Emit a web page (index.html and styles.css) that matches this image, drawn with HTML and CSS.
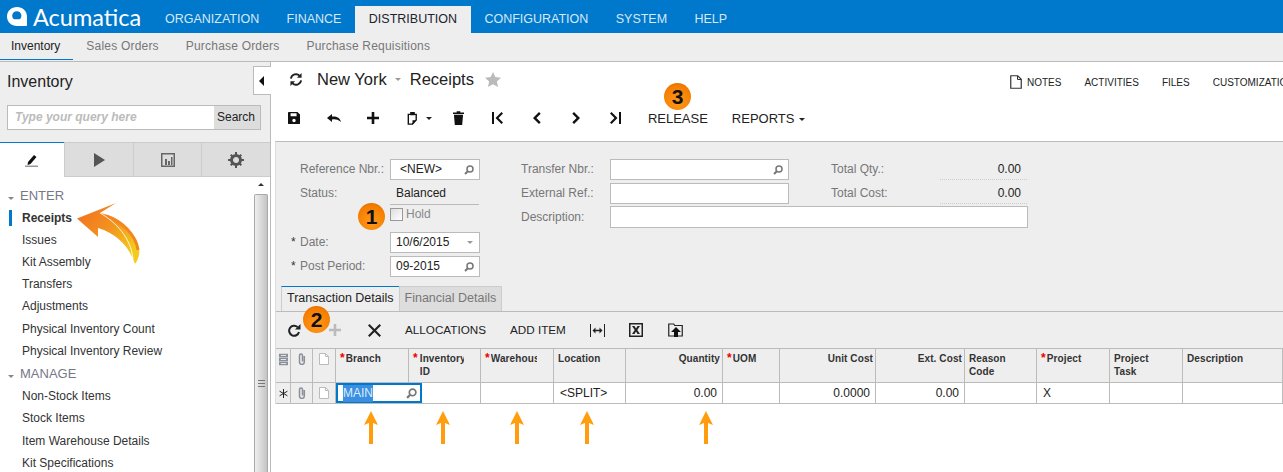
FILE: index.html
```html
<!DOCTYPE html>
<html>
<head>
    <title>Receipts</title>
    <link rel="stylesheet" href="styles.css">
</head>
<body>
    <div id="page">
        <div class="topBar">
            <div class="logo">
                <svg width="20" height="19" viewBox="0 0 20 19"><path fill="#fff" fill-rule="evenodd" d="M10 0C4.400 0 0 4.100 0 9.500S4.400 19 10 19h9c.6 0 1-.4 1-1V9.500C20 4.100 15.600 0 10 0zM9.800 4.200c2.600 0 4.600 2 4.600 4.400 0 1.700-.7 3.600-2 3.600H7.200c-1.300 0-2-1.900-2-3.600 0-2.400 2-4.400 4.600-4.400z"/></svg>
                <span class="logoText">Acumatica</span>
            </div>
            <div class="topNav">
                <a>ORGANIZATION</a>
                <a>FINANCE</a>
                <a class="active">DISTRIBUTION</a>
                <a>CONFIGURATION</a>
                <a>SYSTEM</a>
                <a>HELP</a>
            </div>
        </div>
        <div class="subNav">
            <a class="active">Inventory</a>
            <a>Sales Orders</a>
            <a>Purchase Orders</a>
            <a>Purchase Requisitions</a>
        </div>
        <div class="main">
            <div class="side">
                <div class="sideTitle">Inventory</div>
                <div class="searchBox">
                    <span class="searchHint">Type your query here</span>
                    <span class="searchBtn">Search</span>
                </div>
                <div class="sideTabs">
                    <div class="sideTab active">
                        <svg width="14" height="14" viewBox="0 0 14 14"><path d="M3 9l6-7 2.500 2-6 7-3 1z" fill="#111"/><rect x="0" y="12.500" width="13" height="1.500" fill="#999"/></svg>
                    </div>
                    <div class="sideTab">
                        <svg width="12" height="14" viewBox="0 0 12 14"><path d="M1 0l11 7-11 7z" fill="#555"/></svg>
                    </div>
                    <div class="sideTab">
                        <svg width="14" height="14" viewBox="0 0 14 14"><rect x=".75" y=".75" width="12.500" height="12.500" fill="none" stroke="#666" stroke-width="1.500"/><path d="M4 6h2v6H4zM7 8h2v4H7zM10 4h1.500v8H10z" fill="#666"/></svg>
                    </div>
                    <div class="sideTab">
                        <svg width="16" height="16" viewBox="0 0 16 16"><circle cx="8" cy="8" r="4.500" fill="none" stroke="#555" stroke-width="3"/><path d="M7 0h2v3H7zM7 13h2v3H7zM0 7h3v2H0zM13 7h3v2h-3zM2 3.400L3.400 2l2 2L4 5.400zM10.600 12L12 10.600l2 2-1.400 1.400zM12.600 2L14 3.400l-2 2L10.600 4zM4 10.600L5.400 12l-2 2L2 12.600z" fill="#555"/></svg>
                    </div>
                </div>
                <div class="sideBody">
                    <div class="menu">
                        <div class="menuHead"><i class="caretDown"></i>ENTER</div>
                        <div class="menuItem current">Receipts</div>
                        <div class="menuItem">Issues</div>
                        <div class="menuItem">Kit Assembly</div>
                        <div class="menuItem">Transfers</div>
                        <div class="menuItem">Adjustments</div>
                        <div class="menuItem">Physical Inventory Count</div>
                        <div class="menuItem">Physical Inventory Review</div>
                        <div class="menuHead"><i class="caretDown"></i>MANAGE</div>
                        <div class="menuItem">Non-Stock Items</div>
                        <div class="menuItem">Stock Items</div>
                        <div class="menuItem">Item Warehouse Details</div>
                        <div class="menuItem">Kit Specifications</div>
                    </div>
                    <div class="scrollBar">
                        <div class="scrollUp"></div>
                        <div class="scrollThumb"><span class="grip"></span></div>
                    </div>
                </div>
            </div>
            <div class="content">
                <div class="screenHead">
                    <div class="titleRow">
                        <svg class="refresh" width="14" height="13" viewBox="0 0 14 14"><path d="M1.500 6a5.600 5.600 0 0 1 9.500-3" fill="none" stroke="#222" stroke-width="2"/><path d="M12.500 8a5.600 5.600 0 0 1-9.500 3" fill="none" stroke="#222" stroke-width="2"/><path d="M13 0v5H8zM1 14V9h5z" fill="#222"/></svg>
                        <span class="crumb">New York</span>
                        <i class="caretGrey"></i>
                        <span class="crumb">Receipts</span>
                        <svg class="star" width="16" height="15" viewBox="0 0 16 15"><path d="M8 0l2.400 5.100 5.600.7-4.100 3.800 1.100 5.400L8 12.300 3 15l1.100-5.400L0 5.800l5.600-.7z" fill="#bbb"/></svg>
                        <div class="links">
                            <svg class="noteIcon" width="12" height="14" viewBox="0 0 12 14"><path d="M.75.75h7l3.500 3.500v9h-10.500z" fill="#fff" stroke="#333" stroke-width="1.200"/><path d="M7.500 1v3.500H11" fill="none" stroke="#333"/></svg>
                            <a class="notes">NOTES</a>
                            <a>ACTIVITIES</a>
                            <a>FILES</a>
                            <a>CUSTOMIZATION</a>
                        </div>
                    </div>
                    <div class="toolRow">
                        <span class="tool"><svg width="12" height="12" viewBox="0 0 14 14"><path fill="#111" fill-rule="evenodd" d="M1 0h10l3 3v10a1 1 0 0 1-1 1H1a1 1 0 0 1-1-1V1a1 1 0 0 1 1-1zM3 1.500V5h7V1.500zM7 8a2 2 0 1 0 0 4 2 2 0 0 0 0-4z"/></svg></span>
                        <span class="tool"><svg width="14" height="8" viewBox="0 0 14 8"><path d="M5 0L0 4l5 4V5.500c3-.5 6 0 9 2.500-1-4.500-5-6-9-5.500z" fill="#111"/></svg></span>
                        <span class="tool"><svg width="12" height="12" viewBox="0 0 12 12"><path d="M4.700 0h2.600v4.700H12v2.600H7.300V12H4.700V7.300H0V4.700h4.700z" fill="#111"/></svg></span>
                        <span class="tool toolPaste"><svg width="11" height="13" viewBox="0 0 11 14"><path d="M1 2.500h8.500v6l-4 4.500H1z" fill="none" stroke="#111" stroke-width="1.500"/><path d="M3 0h5v3.500H3zM9 9H5.500v4.500z" fill="#111"/></svg><i class="caretBlack"></i></span>
                        <span class="tool"><svg width="11" height="14" viewBox="0 0 12 15"><path d="M1 4h10l-1 11H2zM0 1.500h4V0h4v1.500h4V3H0z" fill="#111"/></svg></span>
                        <span class="tool"><svg width="11" height="12" viewBox="0 0 11 12"><path d="M0 0h2v12H0zM9.500 0L11 1.500 6.500 6l4.500 4.500L9.500 12l-6-6z" fill="#111"/></svg></span>
                        <span class="tool"><svg width="8" height="12" viewBox="0 0 8 12"><path d="M6 0l1.700 1.700L3.400 6l4.300 4.300L6 12 0 6z" fill="#111"/></svg></span>
                        <span class="tool"><svg width="8" height="12" viewBox="0 0 8 12"><path d="M2 0L.3 1.700 4.600 6 .3 10.300 2 12l6-6z" fill="#111"/></svg></span>
                        <span class="tool"><svg width="11" height="12" viewBox="0 0 11 12"><path d="M9 0h2v12H9zM1.500 0L0 1.500 4.500 6 0 10.500 1.500 12l6-6z" fill="#111"/></svg></span>
                        <a class="toolText release">RELEASE</a>
                        <a class="toolText">REPORTS<i class="caretBlack"></i></a>
                    </div>
                </div>
                <div class="formArea">
                    <div class="fields">
                        <div class="col colOne">
                            <div class="row"><label>Reference Nbr.:</label><div class="input wide"><span class="newVal">&lt;NEW&gt;</span><svg class="mag" width="10" height="10" viewBox="0 0 10 10"><circle cx="6" cy="4" r="3" fill="none" stroke="#777" stroke-width="1.500"/><path d="M3.800 6.200L1 9" stroke="#777" stroke-width="2"/></svg></div></div>
                            <div class="row"><label>Status:</label><div class="plainVal">Balanced</div></div>
                            <div class="row holdRow"><span class="check"></span><span class="checkLabel">Hold</span></div>
                            <div class="row"><label class="req">Date:</label><div class="input wide">10/6/2015<i class="caretGrey"></i></div></div>
                            <div class="row"><label class="req">Post Period:</label><div class="input wide">09-2015<svg class="mag" width="10" height="10" viewBox="0 0 10 10"><circle cx="6" cy="4" r="3" fill="none" stroke="#777" stroke-width="1.500"/><path d="M3.800 6.200L1 9" stroke="#777" stroke-width="2"/></svg></div></div>
                        </div>
                        <div class="col colTwo">
                            <div class="row"><label>Transfer Nbr.:</label><div class="input mid"><svg class="mag" width="10" height="10" viewBox="0 0 10 10"><circle cx="6" cy="4" r="3" fill="none" stroke="#777" stroke-width="1.500"/><path d="M3.800 6.200L1 9" stroke="#777" stroke-width="2"/></svg></div></div>
                            <div class="row"><label>External Ref.:</label><div class="input mid"></div></div>
                            <div class="row"><label>Description:</label><div class="input long"></div></div>
                        </div>
                        <div class="col colThree">
                            <div class="row"><label>Total Qty.:</label><div class="total">0.00</div></div>
                            <div class="row"><label>Total Cost:</label><div class="total">0.00</div></div>
                        </div>
                    </div>
                    <div class="formTabs">
                        <div class="formTab active">Transaction Details</div>
                        <div class="formTab">Financial Details</div>
                    </div>
                    <div class="gridTools">
                        <svg class="gridRefresh" width="13" height="14" viewBox="0 0 13 14"><path d="M11 9a5 5 0 1 1-1.500-5" fill="none" stroke="#222" stroke-width="2"/><path d="M12.500 1v5.500H7z" fill="#222"/></svg>
                        <svg class="gridPlus" width="12" height="12" viewBox="0 0 12 12"><path d="M4.700 0h2.600v4.700H12v2.600H7.300V12H4.700V7.300H0V4.700h4.700z" fill="#bbb"/></svg>
                        <svg class="gridDel" width="13" height="13" viewBox="0 0 13 13"><path d="M1.500 0L6.500 5l5-5L13 1.500 8 6.500l5 5-1.500 1.500-5-5-5 5L0 11.500l5-5-5-5z" fill="#222"/></svg>
                        <a class="gridBtn">ALLOCATIONS</a>
                        <a class="gridBtn">ADD ITEM</a>
                        <svg class="gridIcon" width="15" height="13" viewBox="0 0 15 13"><path d="M0 0h1v13H0zM14 0h1v13h-1zM2.500 6.500l3-3v2.200h4V3.500l3 3-3 3V7.300h-4v2.200z" fill="#222"/></svg>
                        <svg class="gridIcon" width="14" height="14" viewBox="0 0 14 14"><rect x=".75" y=".75" width="12.500" height="12.500" fill="#eee" stroke="#222" stroke-width="1.500"/><path d="M3 3h2.500L7 5.500 8.500 3H11L8.300 7 11 11H8.500L7 8.500 5.500 11H3l2.700-4z" fill="#222"/></svg>
                        <svg class="gridIcon lastIcon" width="16" height="15" viewBox="0 0 16 15"><path d="M.75 3V1h5l1 1.500h7.500V13H.75z" fill="#eee" stroke="#222" stroke-width="1.200"/><path d="M8 4l5 5h-3v5H6V9H3z" fill="#111"/></svg>
                    </div>
                    <div class="grid">
                        <div class="cell head iconCell"><svg width="9" height="13" viewBox="0 0 10 13"><path d="M0 0h10v4H0zM0 4.500h10v4H0zM0 9h10v4H0z" fill="#8a8f99"/><path d="M2 2h6M2 6.500h6M2 11h6" stroke="#eee"/></svg></div>
                        <div class="cell head iconCell"><svg width="8" height="12" viewBox="0 0 8 12"><path d="M6.300 3v6a2.400 2.400 0 0 1-4.800 0V2.500a1.500 1.500 0 0 1 3 0V8.500" fill="none" stroke="#8a8f99" stroke-width="1.500"/></svg></div>
                        <div class="cell head iconCell"><svg width="10" height="12" viewBox="0 0 10 12"><path d="M.5.500h6l3 3v8h-9z" fill="#fff" stroke="#bbb"/><path d="M6.500.500v3h3" fill="none" stroke="#bbb"/></svg></div>
                        <div class="cell head starCell"><b>*</b>Branch</div>
                        <div class="cell head starCell clipCell"><b>*</b><span class="wrapName">Inventory ID</span></div>
                        <div class="cell head starCell clipCell"><b>*</b><span class="oneLine">Warehouse</span></div>
                        <div class="cell head">Location</div>
                        <div class="cell head right">Quantity</div>
                        <div class="cell head starCell"><b>*</b>UOM</div>
                        <div class="cell head right">Unit Cost</div>
                        <div class="cell head right">Ext. Cost</div>
                        <div class="cell head">Reason<br>Code</div>
                        <div class="cell head starCell"><b>*</b>Project</div>
                        <div class="cell head">Project<br>Task</div>
                        <div class="cell head">Description</div>

                        <div class="cell iconCell rowHead"><svg width="9" height="9" viewBox="0 0 9 9"><path d="M4.500 0v9M.6 2.200l7.800 4.600M8.400 2.200L.6 6.800" stroke="#222"/></svg></div>
                        <div class="cell iconCell rowHead"><svg width="8" height="12" viewBox="0 0 8 12"><path d="M6.300 3v6a2.400 2.400 0 0 1-4.800 0V2.500a1.500 1.500 0 0 1 3 0V8.500" fill="none" stroke="#8a8f99" stroke-width="1.500"/></svg></div>
                        <div class="cell iconCell rowHead"><svg width="10" height="12" viewBox="0 0 10 12"><path d="M.5.500h6l3 3v8h-9z" fill="#fff" stroke="#bbb"/><path d="M6.500.500v3h3" fill="none" stroke="#bbb"/></svg></div>
                        <div class="cell editCell">
                            <div class="editor"><span class="selected">MAIN</span><svg class="mag" width="11" height="11" viewBox="0 0 10 10"><circle cx="6" cy="4" r="3" fill="none" stroke="#777" stroke-width="1.500"/><path d="M3.800 6.200L1 9" stroke="#777" stroke-width="2"/></svg></div>
                        </div>
                        <div class="cell"></div>
                        <div class="cell"></div>
                        <div class="cell">&lt;SPLIT&gt;</div>
                        <div class="cell right">0.00</div>
                        <div class="cell"></div>
                        <div class="cell right">0.0000</div>
                        <div class="cell right">0.00</div>
                        <div class="cell"></div>
                        <div class="cell">X</div>
                        <div class="cell"></div>
                        <div class="cell"></div>
                    </div>
                </div>
            </div>
        </div>

        <div class="collapse"><i></i></div>

        <svg class="bigArrow" width="70" height="70" viewBox="0 0 70 70">
            <defs>
                <linearGradient id="arrowFill" x1="0" y1="0.200" x2="0.800" y2="0.900">
                    <stop offset="0" stop-color="#f47320"/>
                    <stop offset="0.500" stop-color="#f2931f"/>
                    <stop offset="1" stop-color="#f2cb1c"/>
                </linearGradient>
            </defs>
            <path d="M1 16.500L40 1 24 11C42 14 60 30 63 46 64 53 62 58 59 62 54 46 42 32 22 26L22 35z" fill="url(#arrowFill)"/>
            <path d="M30 14C46 19 60 33 62 48" fill="none" stroke="#f4861f" stroke-width="3"/>
            <path d="M24 11C40 20 55 36 57 57" fill="none" stroke="#fff" stroke-width="1" opacity=".85"/>
        </svg>

        <div class="badge badgeOne">1</div>
        <div class="badge badgeTwo">2</div>
        <div class="badge badgeThree">3</div>

        <svg class="upArrow upA" width="14" height="33" viewBox="0 0 14 33"><path d="M7 0l7 14-5-2v21H5V12l-5 2z" fill="#ff9d0e"/></svg>
        <svg class="upArrow upB" width="14" height="33" viewBox="0 0 14 33"><path d="M7 0l7 14-5-2v21H5V12l-5 2z" fill="#ff9d0e"/></svg>
        <svg class="upArrow upC" width="14" height="33" viewBox="0 0 14 33"><path d="M7 0l7 14-5-2v21H5V12l-5 2z" fill="#ff9d0e"/></svg>
        <svg class="upArrow upD" width="14" height="33" viewBox="0 0 14 33"><path d="M7 0l7 14-5-2v21H5V12l-5 2z" fill="#ff9d0e"/></svg>
        <svg class="upArrow upE" width="14" height="33" viewBox="0 0 14 33"><path d="M7 0l7 14-5-2v21H5V12l-5 2z" fill="#ff9d0e"/></svg>
    </div>
</body>
</html>
```
FILE: styles.css
```css
* {
    box-sizing: border-box;
}
body {
    margin: 0;
    font-family: "Liberation Sans", Arial, sans-serif;
    font-size: 12px;
    color: #222;
    background-color: #fff;
}
#page {
    position: relative;
    width: 1283px;
    height: 472px;
    overflow: hidden;
}
.topBar {
    display: flex;
    height: 33px;
    background-color: #0078cc;
}
.logo {
    display: flex;
    align-items: center;
    width: 151.300px;
    padding-left: 7px;
    gap: 6px;
}
.logoText {
    font-family: Lato, sans-serif;
    font-size: 23.500px;
    color: #fff;
}
.topNav {
    display: flex;
    align-items: flex-end;
}
.topNav a {
    height: 27px;
    padding: 0 13.700px;
    line-height: 26px;
    font-size: 12.500px;
    color: #d6e9f7;
}
.topNav a.active {
    background-color: #eee;
    color: #22222e;
}
.subNav {
    display: flex;
    height: 29px;
    background-color: #eee;
    border-bottom: 1px solid #bbb;
}
.subNav a {
    padding: 0 13.500px;
    line-height: 27px;
    letter-spacing: .2px;
    color: #777;
}
.subNav a.active {
    padding: 0 12.500px 0 11px;
    height: 27px;
    border-bottom: 1px solid #0078cc;
    color: #222;
    letter-spacing: 0;
}
.main {
    display: flex;
    height: 410px;
}
.side {
    display: flex;
    flex-direction: column;
    width: 271px;
    background-color: #eee;
    border-right: 1px solid #bbb;
    overflow: hidden;
}
.sideTitle {
    padding: 11px 0 0 7px;
    height: 43px;
    flex: none;
    font-size: 16px;
}
.searchBox {
    display: flex;
    height: 25px;
    flex: none;
    margin: 0 9px 0 7px;
    border: 1px solid #bbb;
    background-color: #fff;
}
.searchHint {
    flex: 1;
    padding-left: 7px;
    line-height: 22px;
    font-weight: bold;
    font-style: italic;
    color: #bbb;
}
.searchBtn {
    width: 46px;
    padding-left: 3px;
    line-height: 22px;
    background-color: #ddd;
}
.sideTabs {
    display: flex;
    height: 35px;
    flex: none;
    margin-top: 12px;
}
.sideTab {
    display: flex;
    align-items: center;
    justify-content: center;
    flex: 1;
    background-color: #ddd;
    border-top: 1px solid #ccc;
    border-left: 1px solid #ccc;
    border-bottom: 1px solid #ccc;
}
.sideTab.active {
    flex: 0 0 64px;
    background-color: #fff;
    border: 0;
    border-top: 1px solid #0078cc;
}
.sideBody {
    display: flex;
    flex: 1;
    min-height: 0;
    background-color: #fff;
}
.menu {
    flex: 1;
    padding-top: 8px;
}
.menuHead {
    height: 22.100px;
    line-height: 21px;
    padding-left: 8px;
    font-size: 13px;
    color: #778;
}
.menuItem + .menuHead {
    margin-top: 1.500px;
}
.menuItem {
    height: 22.100px;
    line-height: 22px;
    padding-left: 22px;
    color: #333;
}
.menuItem.current {
    position: relative;
    font-weight: bold;
}
.menuItem.current::before {
    content: "";
    position: absolute;
    left: 9px;
    top: 3px;
    width: 3px;
    height: 16px;
    background-color: #0078cc;
}
.caretDown {
    display: inline-block;
    margin: 0 6px 0 0;
    border-left: 3.500px solid transparent;
    border-right: 3.500px solid transparent;
    border-top: 3.500px solid #888;
}
.scrollBar {
    width: 16px;
    padding-right: 2px;
}
.scrollUp {
    position: relative;
    height: 17px;
}
.scrollUp::after {
    content: "";
    position: absolute;
    left: 4px;
    top: 6px;
    border-left: 3px solid transparent;
    border-right: 3px solid transparent;
    border-bottom: 3.500px solid #333;
}
.scrollThumb {
    display: flex;
    align-items: center;
    justify-content: center;
    height: 378px;
    background: linear-gradient(to right, #eee, #dcdcdc 45%, #c4c4c4);
    border: 1px solid #aaa;
    border-bottom: 0;
    border-radius: 2px 2px 0 0;
}
.grip {
    width: 7px;
    height: 7px;
    border-top: 1px solid #777;
    border-bottom: 1px solid #777;
    background: linear-gradient(#777, #777) center / 100% 1px no-repeat;
}
.content {
    flex: 1;
    min-width: 0;
    padding-left: 4px;
}
.screenHead {
    height: 79px;
}
.titleRow {
    display: flex;
    align-items: center;
    height: 35px;
    padding-left: 14px;
}
.refresh {
    margin-right: 14px;
}
.crumb {
    font-size: 16.500px;
}
.caretGrey {
    display: inline-block;
    margin: 0 9px 0 8px;
    border-left: 3.500px solid transparent;
    border-right: 3.500px solid transparent;
    border-top: 3.500px solid #999;
}
.star {
    margin-left: 11px;
}
.links {
    display: flex;
    align-items: center;
    margin-left: auto;
    padding-top: 5px;
    width: 273px;
    flex: none;
    white-space: nowrap;
    font-size: 10px;
}
.noteIcon {
    flex: none;
}
.links a {
    margin-right: 23px;
}
.links a.notes {
    margin-left: 5px;
}
.toolRow {
    display: flex;
    align-items: center;
    height: 41px;
    padding-top: 1px;
}
.tool {
    display: flex;
    align-items: center;
    justify-content: center;
    width: 39.300px;
    height: 20px;
}
.tool:first-child {
    width: 37px;
    margin-right: 2.300px;
}
.tool.toolPaste {
    width: 46px;
    gap: 8px;
    padding-left: 8px;
}
.caretBlack {
    display: inline-block;
    border-left: 3.500px solid transparent;
    border-right: 3.500px solid transparent;
    border-top: 3.500px solid #222;
}
.toolText {
    margin-right: 24px;
    font-size: 13px;
    color: #222;
}
.toolText .caretBlack {
    margin: 0 0 2px 5px;
}
.release {
    margin-left: 12.500px;
}
.formArea {
    background-color: #eee;
    border-top: 1px solid #bbb;
    border-left: 1px solid #ddd;
}
.fields {
    display: flex;
    height: 144px;
    padding-top: 15px;
}
.col .row {
    display: flex;
    align-items: center;
    height: 24px;
}
.col label {
    color: #777;
}
.colOne {
    width: 245px;
}
.colOne label {
    position: relative;
    width: 90px;
    margin-left: 24px;
    flex: none;
}
.req::before {
    content: "*";
    position: absolute;
    left: -9px;
    color: #333;
}
.col .holdRow {
    align-items: flex-start;
    height: 25px;
    padding-left: 114px;
}
.colTwo {
    width: 310px;
}
.colTwo label {
    width: 89px;
    flex: none;
}
.colThree {
    width: 196px;
}
.colThree label {
    width: 109px;
    flex: none;
}
.input {
    position: relative;
    height: 21px;
    line-height: 19px;
    padding-left: 5px;
    flex: none;
    background-color: #fff;
    border: 1px solid #bbb;
    color: #222;
}
.input .caretGrey {
    position: absolute;
    right: 0;
    top: 8px;
    margin-right: 6px;
}
.mag {
    position: absolute;
    right: 5px;
    top: 5px;
}
.wide {
    width: 90px;
}
.mid {
    width: 179px;
}
.long {
    width: 418px;
    height: 22px;
}
.newVal {
    padding-left: 4px;
}
.plainVal {
    width: 89px;
    height: 23px;
    line-height: 22px;
    padding-left: 6px;
    border-bottom: 1px solid #bbb;
    color: #222;
}
.check {
    width: 13px;
    height: 13px;
    margin-top: 3px;
    background: linear-gradient(135deg, #ddd, #fff);
    border: 1px solid #999;
}
.checkLabel {
    margin: 2px 0 0 3px;
    line-height: 14px;
    color: #888;
}
.total {
    width: 87px;
    height: 21px;
    line-height: 20px;
    padding-right: 6px;
    text-align: right;
    border-bottom: 1px dotted #ccc;
    color: #222;
}
.formTabs {
    display: flex;
    height: 26px;
    padding-left: 5px;
    border-bottom: 1px solid #bbb;
}
.formTab {
    padding: 0 5px;
    line-height: 22px;
    font-size: 12.500px;
    color: #777;
    background-color: #ddd;
    border: 1px solid #ccc;
    border-bottom: 0;
}
.formTab.active {
    background-color: #eee;
    color: #222;
    border-top: 1px solid #0078cc;
    border-right: 0;
}
.gridTools {
    display: flex;
    align-items: center;
    height: 36px;
    padding-left: 12px;
}
.gridPlus {
    margin-left: 28px;
}
.gridDel {
    margin-left: 27px;
}
.gridBtn {
    margin: 0 0 2px 24px;
    font-size: 11.700px;
    color: #222;
}
.gridIcon {
    margin-left: 24px;
}
.lastIcon {
    margin-left: 25px;
}
.grid {
    display: grid;
    grid-template-columns: 15px 22px 23px 73px 72px 73px 72px 97px 57px 96px 89px 72px 73px 73px 100px;
    grid-template-rows: 34px 21px;
    background-color: #fff;
    border-top: 1px solid #bbb;
}
.cell {
    overflow: hidden;
    padding: 0 6px;
    line-height: 20px;
    border-right: 1px solid #bbb;
    border-bottom: 1px solid #bbb;
}
.cell.right {
    text-align: right;
    padding-right: 5px;
}
.head {
    padding: 3px 4px 0;
    font-size: 10px;
    font-weight: bold;
    letter-spacing: .1px;
    line-height: 13px;
    color: #333;
    background-color: #eee;
}
.head b {
    margin-right: 1px;
    font-size: 12px;
    color: #e00;
}
.head.right {
    padding-right: 2px;
}
.clipCell {
    display: flex;
    padding-right: 16px;
}
.wrapName {
    padding-left: 1px;
    overflow: hidden;
}
.oneLine {
    overflow: hidden;
    white-space: nowrap;
}
.cell.iconCell {
    padding: 4px 0 0;
    text-align: center;
}
.rowHead {
    background-color: #eee;
    line-height: 14px;
}
.editCell {
    position: relative;
    z-index: 1;
    overflow: visible;
    padding: 0;
}
.editor {
    position: absolute;
    left: 0;
    top: 0;
    width: 86px;
    height: 20px;
    padding-left: 5px;
    line-height: 17px;
    background-color: #fff;
    border: 2px solid #0078cc;
}
.editor .mag {
    right: 3px;
    top: 3px;
}
.selected {
    display: inline-block;
    background-color: #3a8fe0;
    color: #dbeeff;
}
.collapse {
    position: absolute;
    left: 253px;
    top: 66px;
    width: 18px;
    height: 29px;
    background-color: #fff;
    border: 1px solid #bbb;
    border-right: 0;
}
.collapse i {
    position: absolute;
    left: 5px;
    top: 9px;
    border-top: 5px solid transparent;
    border-bottom: 5px solid transparent;
    border-right: 5px solid #111;
}
.bigArrow {
    position: absolute;
    left: 76px;
    top: 202px;
}
.badge {
    position: absolute;
    width: 27px;
    height: 27px;
    line-height: 27px;
    border-radius: 50%;
    text-align: center;
    font-size: 21px;
    font-weight: bold;
    color: #111;
    background: radial-gradient(circle at 50% 70%, #ff9a1c, #f47c00 70%, #c86000);
}
.badgeOne {
    left: 358px;
    top: 203px;
}
.badgeTwo {
    left: 303px;
    top: 306px;
}
.badgeThree {
    left: 664px;
    top: 83px;
}
.upArrow {
    position: absolute;
    top: 411px;
}
.upA {
    left: 364px;
}
.upB {
    left: 436px;
}
.upC {
    left: 510px;
}
.upD {
    left: 580px;
}
.upE {
    left: 699px;
}
```
